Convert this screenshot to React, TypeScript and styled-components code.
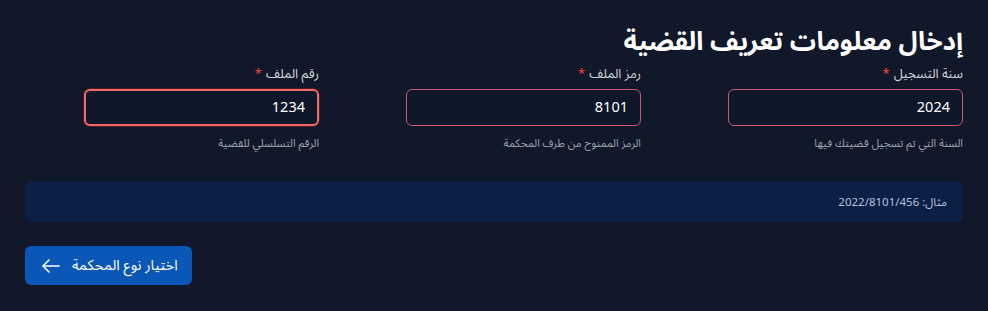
import styled, { createGlobalStyle } from 'styled-components';

const GlobalStyle = createGlobalStyle`
  html, body {
    margin: 0;
    padding: 0;
    background: #0f172a;
  }
  body {
    font-family: "Noto Sans Arabic", "Noto Sans", "DejaVu Sans", sans-serif;
    color: #f1f5f9;
  }
`;

const Page = styled.div`
  direction: rtl;
  padding: 25px 25px 25px;
  background: #101829;
  min-height: 311px;
  box-sizing: border-box;
  display: flex;
  flex-direction: column;
`;

const Title = styled.h1`
  margin: 0 0 6px;
  font-size: 26px;
  font-weight: 700;
  line-height: 34px;
  color: #ffffff;
`;

const Fields = styled.div`
  display: grid;
  grid-template-columns: repeat(3, 1fr);
  column-gap: 28px;
`;

const Field = styled.div`
  display: flex;
  flex-direction: column;
  align-items: flex-start;
`;

const Label = styled.label`
  font-size: 13px;
  line-height: 18px;
  color: #d1d5db;
  margin-bottom: 6px;
`;

const Star = styled.span`
  color: #ef4444;
  margin-right: 4px;
`;

const Input = styled.input<{ $active?: boolean }>`
  width: 80%;
  height: 37px;
  box-sizing: border-box;
  direction: rtl;
  background: #0f172a;
  color: #ffffff;
  font-family: inherit;
  font-size: 14.5px;
  padding: 0 12px;
  border-radius: 6px;
  outline: none;
  border: ${(p) => (p.$active ? '2px solid #f06a6a' : '1px solid #c65b6f')};
  box-shadow: ${(p) => (p.$active ? '0 0 0 1px rgba(127, 29, 29, 0.6)' : 'none')};
`;

const Help = styled.div`
  margin-top: 10px;
  font-size: 11px;
  line-height: 16px;
  color: #9ca3af;
`;

const Example = styled.div`
  margin-top: 29px;
  background: #0b1f47;
  border-radius: 6px;
  height: 41px;
  display: flex;
  align-items: center;
  padding: 0 16px;
  font-size: 11.5px;
  color: #b4c3dc;
`;

const Button = styled.button`
  margin-top: 24px;
  align-self: flex-end;
  display: inline-flex;
  align-items: center;
  gap: 11px;
  height: 39px;
  padding: 0 14px 0 16px;
  border: none;
  border-radius: 6px;
  background: #0b57b8;
  color: #ffffff;
  font-family: inherit;
  font-size: 14.5px;
  cursor: pointer;
`;

const fields = [
  { label: 'سنة التسجيل', value: '2024', help: 'السنة التي تم تسجيل قضيتك فيها' },
  { label: 'رمز الملف', value: '8101', help: 'الرمز الممنوح من طرف المحكمة' },
  { label: 'رقم الملف', value: '1234', help: 'الرقم التسلسلي للقضية', active: true },
];

const ArrowLeft = () => (
  <svg width="20" height="18" viewBox="0 0 20 18" fill="none" stroke="currentColor" strokeWidth="1.6" strokeLinecap="round" strokeLinejoin="round">
    <path d="M18 9H2" />
    <path d="M8 3L2 9l6 6" />
  </svg>
);

export default function App() {
  return (
    <>
      <GlobalStyle />
      <Page>
        <Title>إدخال معلومات تعريف القضية</Title>
        <Fields>
          {fields.map((f) => (
            <Field key={f.label}>
              <Label>
                {f.label}
                <Star>*</Star>
              </Label>
              <Input defaultValue={f.value} $active={f.active} />
              <Help>{f.help}</Help>
            </Field>
          ))}
        </Fields>
        <Example>مثال: 2022/8101/456</Example>
        <Button>
          اختيار نوع المحكمة
          <ArrowLeft />
        </Button>
      </Page>
    </>
  );
}
